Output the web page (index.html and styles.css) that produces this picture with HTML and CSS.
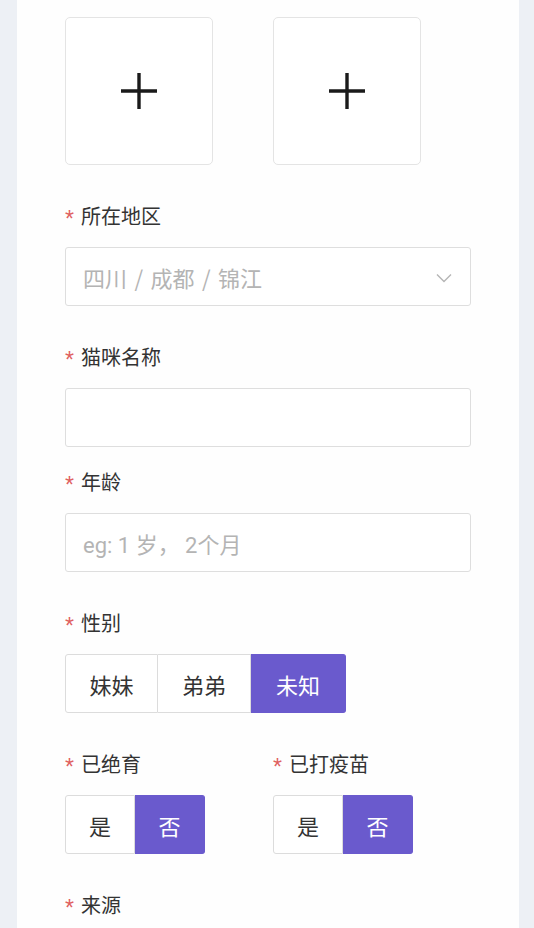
FILE: index.html
```html
<!DOCTYPE html>
<html lang="zh-CN">
<head>
<meta charset="utf-8">
<title>猫咪信息</title>
<link rel="stylesheet" href="styles.css">
</head>
<body>
<div class="card">
  <div class="uploads">
    <div class="upload">
      <svg width="36" height="36" viewBox="0 0 36 36"><path d="M18 0V36M0 18H36" stroke="#1a1a1a" stroke-width="3.4"/></svg>
    </div>
    <div class="upload">
      <svg width="36" height="36" viewBox="0 0 36 36"><path d="M18 0V36M0 18H36" stroke="#1a1a1a" stroke-width="3.4"/></svg>
    </div>
  </div>

  <div class="field">
    <div class="label"><span class="req">*</span>所在地区</div>
    <div class="input select">
      <span class="placeholder">四川 / 成都 / 锦江</span>
      <svg class="chev" width="16" height="10" viewBox="0 0 16 10"><path d="M1 1.5L8 8.5L15 1.5" fill="none" stroke="#b5b5b5" stroke-width="1.4"/></svg>
    </div>
  </div>

  <div class="field">
    <div class="label"><span class="req">*</span>猫咪名称</div>
    <div class="input"></div>
  </div>

  <div class="field field-after-tight">
    <div class="label"><span class="req">*</span>年龄</div>
    <div class="input"><span class="placeholder">eg: 1 岁， 2个月</span></div>
  </div>

  <div class="field">
    <div class="label"><span class="req">*</span>性别</div>
    <div class="seg">
      <div class="opt w93">妹妹</div>
      <div class="opt w93">弟弟</div>
      <div class="opt w95 on">未知</div>
    </div>
  </div>

  <div class="field row2">
    <div class="col">
      <div class="label"><span class="req">*</span>已绝育</div>
      <div class="seg">
        <div class="opt w70">是</div>
        <div class="opt w70 on">否</div>
      </div>
    </div>
    <div class="col">
      <div class="label"><span class="req">*</span>已打疫苗</div>
      <div class="seg">
        <div class="opt w70">是</div>
        <div class="opt w70 on">否</div>
      </div>
    </div>
  </div>

  <div class="field">
    <div class="label"><span class="req">*</span>来源</div>
  </div>
</div>
</body>
</html>
```

FILE: styles.css
```css
* { box-sizing: border-box; }
html, body { margin: 0; padding: 0; }
body {
  background: #edf0f5;
  font-family: "Noto Sans CJK SC", "Noto Sans", sans-serif;
  color: #333;
  width: 534px;
  height: 928px;
  overflow: hidden;
}
.card {
  margin-left: 17px;
  width: 502px;
  min-height: 928px;
  background: #fefefe;
  padding: 17px 0 0 48px;
}
.uploads {
  display: flex;
  gap: 60px;
}
.upload {
  width: 148px;
  height: 148px;
  border: 1px solid #e4e4e4;
  border-radius: 5px;
  display: flex;
  align-items: center;
  justify-content: center;
  background: #fff;
}
.field { margin-top: 36px; }
.field-after-tight { margin-top: 20px; }
.label {
  height: 30px;
  line-height: 30px;
  font-size: 20px;
  color: #333;
  display: flex;
  align-items: center;
  margin-bottom: 16px;
}
.req {
  color: #e06060;
  font-size: 23px;
  width: 16px;
  margin-top: 6px;
  font-family: "Liberation Sans", sans-serif;
}
.input {
  width: 406px;
  height: 59px;
  border: 1px solid #dedede;
  border-radius: 3px;
  background: #fff;
  display: flex;
  align-items: center;
  padding-left: 17px;
  padding-right: 18px;
}
.select { justify-content: space-between; }
.placeholder {
  font-size: 22px;
  color: #b4b4b4;
  font-family: Roboto, "Noto Sans CJK SC", sans-serif;
}
.select .placeholder {
  font-family: "Noto Sans CJK SC", sans-serif;
  word-spacing: 2.5px;
}
.chev { margin-top: 2px; }
.seg {
  display: flex;
  height: 59px;
}
.opt {
  border: 1px solid #dcdcdc;
  display: flex;
  align-items: center;
  justify-content: center;
  font-size: 22px;
  color: #333;
  background: #fff;
}
.opt + .opt { border-left: none; }
.opt:first-child { border-radius: 3px 0 0 3px; }
.opt:last-child { border-radius: 0 3px 3px 0; }
.opt.on {
  background: #6a5acd;
  border-color: #6a5acd;
  color: #fff;
}
.w93 { width: 93px; }
.w95 { width: 95px; }
.w70 { width: 70px; }
.row2 {
  display: flex;
  gap: 68px;
}
.col { width: 140px; }
```
